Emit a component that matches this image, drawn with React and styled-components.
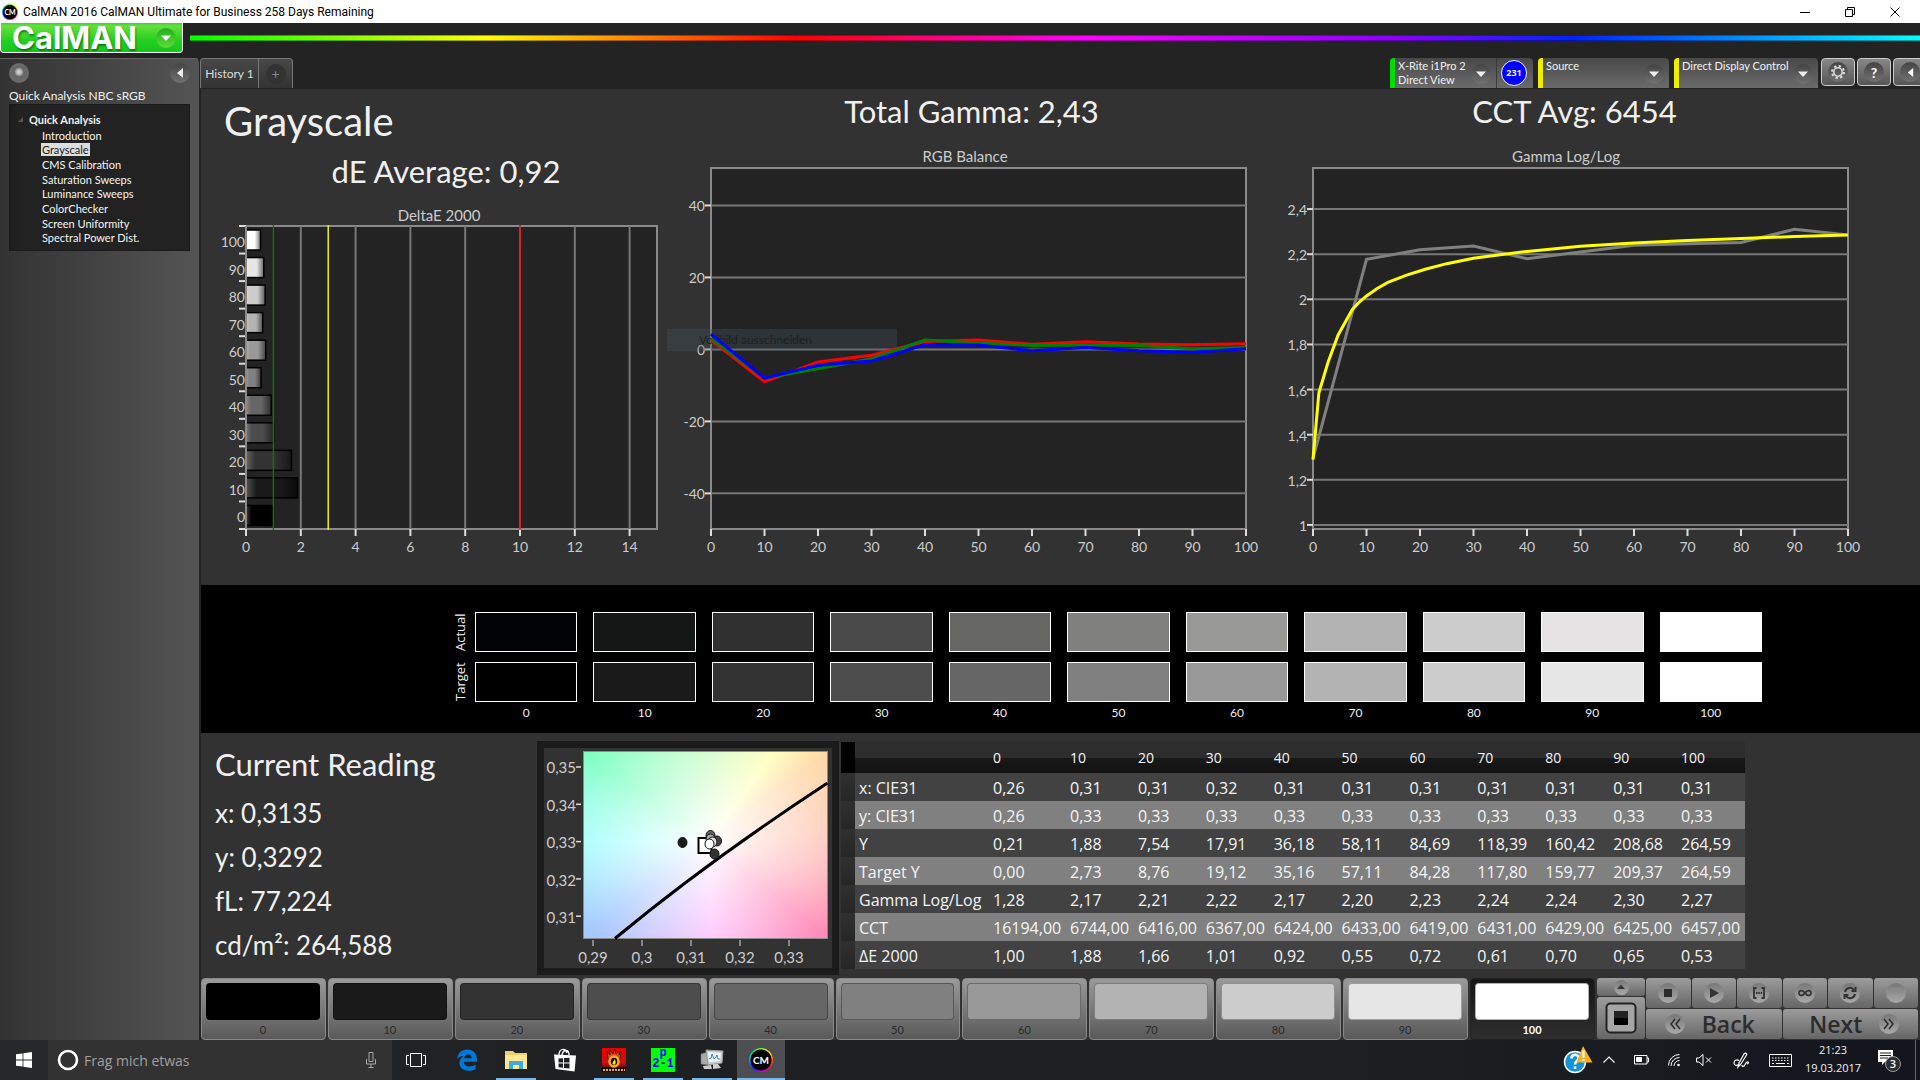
import React from 'react';
import styled, { createGlobalStyle, css } from 'styled-components';

const calibri = "Lato, 'Open Sans', sans-serif";
const segoe = "'Open Sans', 'Noto Sans', sans-serif";

const GlobalStyle = createGlobalStyle`
	* {
		box-sizing: border-box;
	}
	body {
		margin: 0;
		background: #232323;
		color: #f0f0f0;
		font-family: ${calibri};
		font-size: 14px;
	}
	button {
		font: inherit;
		color: inherit;
		border: 0;
		padding: 0;
		background: none;
	}
	svg {
		display: block;
	}
`;

const LEVELS = [ 0, 10, 20, 30, 40, 50, 60, 70, 80, 90, 100 ];

const TARGET = [
	'#000000',
	'#1a1a1a',
	'#333333',
	'#4d4d4d',
	'#666666',
	'#808080',
	'#999999',
	'#b3b3b3',
	'#cccccc',
	'#e6e6e6',
	'#ffffff'
];

const ACTUAL = [
	'#020304',
	'#151716',
	'#303030',
	'#4a4a4a',
	'#676765',
	'#80807f',
	'#999998',
	'#b3b3b3',
	'#cccbcb',
	'#e6e4e5',
	'#ffffff'
];

const DELTA_E = [ 1.0, 1.88, 1.66, 1.01, 0.92, 0.55, 0.72, 0.61, 0.7, 0.65, 0.53 ];

const RGB_BALANCE = [
	{ color: '#ff0000', values: [ 2.6, -9, -3.5, -1.6, 2.2, 2.6, 1.4, 2.1, 1.5, 1.3, 1.6 ] },
	{ color: '#008000', values: [ 3, -8, -5.4, -2.6, 2.6, 1.8, 1.1, 1.2, 1.1, 0.2, 0.5 ] },
	{ color: '#0000ff', values: [ 4.2, -8, -4.4, -3.2, 1.3, 1.2, -0.4, 0.5, -0.4, -0.8, 0.2 ] }
];

const toPoints = values => values.map((v, i) => [ i * 10, v ]);

const GAMMA_ACTUAL = toPoints([ 1.295, 2.177, 2.22, 2.236, 2.18, 2.21, 2.24, 2.246, 2.252, 2.31, 2.285 ]);

const GAMMA_TARGET = [
	[ 0, 1.29 ],
	[ 1.1, 1.586 ],
	[ 2.8, 1.72 ],
	[ 4.7, 1.842 ],
	[ 7.3, 1.953 ],
	[ 8.6, 1.987 ],
	[ 10, 2.015 ],
	[ 12, 2.048 ],
	[ 14, 2.075 ],
	[ 17.5, 2.107 ],
	[ 21, 2.133 ],
	[ 25, 2.158 ],
	[ 30, 2.182 ],
	[ 35, 2.198 ],
	[ 40, 2.212 ],
	[ 50, 2.235 ],
	[ 60, 2.25 ],
	[ 70, 2.261 ],
	[ 80, 2.27 ],
	[ 90, 2.278 ],
	[ 100, 2.285 ]
];

const READINGS = [
	[ 'x: CIE31', '0,26', '0,31', '0,31', '0,32', '0,31', '0,31', '0,31', '0,31', '0,31', '0,31', '0,31' ],
	[ 'y: CIE31', '0,26', '0,33', '0,33', '0,33', '0,33', '0,33', '0,33', '0,33', '0,33', '0,33', '0,33' ],
	[ 'Y', '0,21', '1,88', '7,54', '17,91', '36,18', '58,11', '84,69', '118,39', '160,42', '208,68', '264,59' ],
	[ 'Target Y', '0,00', '2,73', '8,76', '19,12', '35,16', '57,11', '84,28', '117,80', '159,77', '209,37', '264,59' ],
	[ 'Gamma Log/Log', '1,28', '2,17', '2,21', '2,22', '2,17', '2,20', '2,23', '2,24', '2,24', '2,30', '2,27' ],
	[
		'CCT',
		'16194,00',
		'6744,00',
		'6416,00',
		'6367,00',
		'6424,00',
		'6433,00',
		'6419,00',
		'6431,00',
		'6429,00',
		'6425,00',
		'6457,00'
	],
	[ 'ΔE 2000', '1,00', '1,88', '1,66', '1,01', '0,92', '0,55', '0,72', '0,61', '0,70', '0,65', '0,53' ]
];

const PAGES = [
	'Introduction',
	'Grayscale',
	'CMS Calibration',
	'Saturation Sweeps',
	'Luminance Sweeps',
	'ColorChecker',
	'Screen Uniformity',
	'Spectral Power Dist.'
];

/* ---------- window frame ---------- */

const Screen = styled.div`
	display: flex;
	flex-direction: column;
	min-height: 100vh;
	overflow: hidden;
`;

const TitleBar = styled.header`
	display: flex;
	align-items: center;
	height: 23px;
	padding: 0 3px 0 2px;
	background: #fff;
	color: #000;
	font: 12px Roboto, sans-serif;
`;

const TitleText = styled.span`
	flex: 1;
	padding-left: 5px;
`;

const WindowButton = styled.button`
	display: grid;
	place-items: center;
	width: 45px;
	height: 20px;
	color: #000;
`;

const LogoRing = styled.span`
	display: grid;
	place-items: center;
	width: ${props => props.$size}px;
	height: ${props => props.$size}px;
	border-radius: 50%;
	background: radial-gradient(circle, #000 60%, transparent 64%),
		conic-gradient(#7f0, #fd0, #f60, #f06, #c0f, #22f, #0af, #0d8, #7f0);
	color: #fff;
	font: bold ${props => (props.$size > 20 ? 10 : 7)}px Lato, sans-serif;
`;

const BrandBar = styled.div`
	display: flex;
	align-items: flex-start;
	height: 35px;
`;

const Brand = styled.button`
	display: flex;
	align-items: center;
	justify-content: space-between;
	width: 183px;
	height: 30px;
	padding: 0 6px 0 11px;
	border: solid #fff;
	border-width: 0 1px 1px 1px;
	border-radius: 0 0 4px 4px;
	background: linear-gradient(#3fd13a, #66e03a 10%, #25cf22 60%, #12c81a);
`;

const BrandName = styled.span`
	font: 700 31px/28px Inter, Lato, sans-serif;
	color: #fff;
	text-shadow: 1px 2px 2px rgba(0, 70, 0, 0.6);
`;

const Rainbow = styled.div`
	flex: 1;
	height: 6px;
	margin: 12px 0 0 7px;
	border: solid rgba(0, 0, 0, 0.35);
	border-width: 1px 0;
	background: linear-gradient(90deg, #0f0, #ff0 17%, #f00 35%, #f0f 52%, #80f 70%, #02f 80%, #0ff);
`;

const Body = styled.div`
	display: flex;
	flex: 1;
`;

/* ---------- sidebar ---------- */

const Sidebar = styled.nav`
	width: 200px;
	padding: 0 9px;
	border-top: 1px solid #666;
	border-right: 1px solid #222;
	border-radius: 0 5px 0 0;
	background: linear-gradient(90deg, #333, #545454);
`;

const SidebarTools = styled.div`
	display: flex;
	justify-content: space-between;
	align-items: center;
	height: 27px;
`;

const Round = styled.span`
	display: grid;
	flex: none;
	place-items: center;
	width: ${props => props.$size || 20}px;
	height: ${props => props.$size || 20}px;
	border-radius: 50%;
	background: ${props => props.$fill || 'linear-gradient(#444, #717171)'};
`;

const WorkflowName = styled.h2`
	margin: 0;
	height: 18px;
	font: 12px/20px ${calibri};
`;

const Tree = styled.div`
	height: 147px;
	padding: 8px 0 0 8px;
	border: 1px solid #1b1b1b;
	background: linear-gradient(90deg, #1c1c1c, #222 8px);
	font-size: 11px;
`;

const TreeRoot = styled.div`
	display: flex;
	align-items: center;
	gap: 6px;
	height: 13px;
	font-weight: bold;
`;

const TreeList = styled.ul`
	display: flex;
	flex-direction: column;
	height: 119px;
	margin: 0;
	padding: 2px 0 0 23px;
	list-style: none;
`;

const TreeItem = styled.li`
	display: flex;
	flex: 1;
	align-items: center;
`;

const TreeLink = styled.a`
	padding: 0 1px;
	line-height: 13px;
	text-decoration: none;
	color: ${props => (props.$active ? '#222' : '#f5f5f5')};
	background: ${props => (props.$active ? '#ddd' : 'transparent')};
`;

/* ---------- tab strip ---------- */

const Main = styled.main`
	display: flex;
	flex: 1;
	flex-direction: column;
	min-width: 0;
`;

const TabStrip = styled.div`
	display: flex;
	align-items: flex-start;
	height: 31px;
	overflow: hidden;
`;

const tabFace = css`
	height: 30px;
	border: 1px solid #777;
	border-bottom: 0;
	background: linear-gradient(#484848, #333);
`;

const Tab = styled.button`
	${tabFace}
	width: 59px;
	border-radius: 4px 0 0 0;
	font-size: 12px;
	color: #ddd;
`;

const AddTab = styled.button`
	${tabFace}
	display: grid;
	place-items: center;
	width: 34px;
	border-left: 0;
	border-radius: 0 4px 0 0;
	color: #888;
`;

const Devices = styled.div`
	display: flex;
	flex: none;
	margin-left: auto;
	width: 530px;
	overflow: hidden;
`;

const Device = styled.div`
	display: flex;
	flex: none;
	width: ${props => props.$width}px;
	height: 30px;
	margin-right: ${props => props.$gap || 5}px;
	border-left: 5px solid ${props => props.$color};
	border-radius: 4px 4px 0 0;
	background: linear-gradient(#484848, #6b6b6b);
`;

const DeviceMenu = styled.button`
	display: flex;
	flex: 1;
	align-items: flex-start;
	justify-content: space-between;
	padding: 1px 5px 0 3px;
	font-size: 11px;
	line-height: 14px;
	text-align: left;
	white-space: pre;
`;

const MenuDot = styled(Round)`
	align-self: center;
`;

const Counter = styled.div`
	display: grid;
	place-items: center;
	width: 37px;
	padding-right: 2px;
	border-left: 1px solid #3a3a3a;
`;

const CounterDot = styled.span`
	width: 26px;
	height: 26px;
	border: 1px solid #eef;
	border-radius: 50%;
	background: #00f;
	font: bold 9px/24px ${segoe};
	text-align: center;
`;

const ToolButton = styled.button`
	display: grid;
	flex: none;
	place-items: center;
	width: 34px;
	height: 28px;
	margin-right: 2px;
	border: 1px solid #ccc;
	border-radius: 4px;
	background: linear-gradient(#888, #555);
	color: #fff;
`;

/* ---------- analysis page ---------- */

const Page = styled.div`
	flex: 1;
	border-left: 1px solid #232323;
	background: #323232;
`;

const Charts = styled.section`
	display: grid;
	grid-template-columns: 466fr 601fr 601fr 51fr;
	height: 496px;
`;

const ChartPanel = styled.div`
	min-width: 0;
`;

const PageTitle = styled.h1`
	margin: 0;
	padding: 8px 0 0 23px;
	height: 60px;
	font: 40px/48px ${calibri};
`;

const Stat = styled.h2`
	margin: 0;
	height: 56px;
	padding-left: ${props => (props.$inset || 0)}px;
	font: 31px/44px ${calibri};
	text-align: center;
`;

const ChartSvg = styled.svg`
	width: 100%;
	height: auto;
	overflow: visible;
	fill: #ccc;
	font: ${props => props.$font || 14}px ${calibri};
`;

const Strip = styled.section`
	height: 148px;
	padding: 17px 158px 0 252px;
	background: #000;
`;

const StripRow = styled.div`
	display: flex;
	height: 40px;
	margin-top: 10px;
`;

const StripName = styled.span`
	width: 22px;
	height: 40px;
	font: 13px/14px ${segoe};
	text-align: center;
	writing-mode: vertical-rl;
	transform: rotate(180deg);
	padding-left: 5px;
`;

const StripCells = styled.div`
	display: grid;
	flex: 1;
	grid-template-columns: repeat(11, 1fr);
	gap: 16px;
`;

const StripLabels = styled(StripCells)`
	margin-top: 5px;
	padding-left: 22px;
	font-size: 12px;
	line-height: 12px;
	text-align: center;
`;

const Swatch = styled.div`
	height: 40px;
	border: 1px solid #fff;
	background: ${props => props.$color};
`;

const Details = styled.section`
	display: flex;
	height: 245px;
	padding-top: 8px;
`;

const Reading = styled.div`
	width: 336px;
	padding-left: 14px;
`;

const ReadingTitle = styled.h2`
	margin: 0;
	height: 50px;
	font: 31px/46px ${calibri};
`;

const ReadingValue = styled.p`
	margin: 0;
	font: 26px/44px ${calibri};
`;

const CieBox = styled.div`
	width: 302px;
	height: 234px;
	margin-right: 2px;
	border: 7px solid #1b1b1b;
`;

const Chromaticity = styled.div`
	height: 100%;
	background: radial-gradient(ellipse farthest-corner at 51% 48%, #fff, rgba(255, 255, 255, 0) 92%),
		conic-gradient(
			from 0deg at 51% 48%,
			#c8fcc0,
			#ffffb0 37deg,
			#ffd8a4 53deg,
			#ffbcae 90deg,
			#ff8cba 129deg,
			#ffbcff 178deg,
			#a6c8ff 232deg,
			#98ffff 270deg,
			#80ffc4 306deg,
			#c8fcc0
		);
`;

const TableArea = styled.div`
	flex: 1;
	padding: 1px 175px 0 0;
`;

const Table = styled.table`
	width: 100%;
	border-collapse: collapse;
	table-layout: fixed;
	font: 16px/20px ${segoe};
	color: #f5f5f5;
`;

const HeadRow = styled.tr`
	height: 31px;
	background: linear-gradient(#2d2d2d 50%, #191919 50%, #111);
	font-size: 14px;
`;

const Row = styled.tr`
	height: 28px;
	background: ${props => (props.$alt ? '#808080' : '#424242')};
`;

const Cell = styled.td`
	padding: 1px 0 0 4px;
	font-weight: 400;
	text-align: left;
	white-space: nowrap;
`;

const Gutter = styled.td`
	width: 14px;
	padding: 0;
	background: ${props => (props.$head ? '#000' : 'linear-gradient(#303030, #262626)')};
`;

const Col = styled.col`
	width: ${props => props.$width}px;
`;

/* ---------- patches and transport ---------- */

const PatchBar = styled.section`
	display: flex;
	height: 62px;
	gap: 2px;
	padding-bottom: 1px;
`;

const Patches = styled.div`
	display: grid;
	flex: 1;
	grid-template-columns: repeat(11, 1fr);
	gap: 2px;
`;

const Patch = styled.button`
	display: flex;
	flex-direction: column;
	padding: 4px 5px 0 4px;
	border: 1px solid ${props => (props.$active ? '#222' : '#8a8a8a')};
	border-radius: 4px;
	background: ${props => (props.$active ? 'linear-gradient(#161616, #2e2e2e)' : 'linear-gradient(#9a9a9a, #595959)')};
	color: ${props => (props.$active ? '#fff' : '#2a2a2a')};
	font-weight: ${props => (props.$active ? 700 : 400)};
	font-size: 11px;
	text-align: center;
`;

const PatchColor = styled.span`
	width: 100%;
	height: 37px;
	border: 1px solid rgba(0, 0, 0, 0.3);
	border-radius: 4px;
	background: ${props => props.$color};
`;

const PatchLabel = styled.span`
	width: 100%;
	line-height: 19px;
`;

const Transport = styled.div`
	display: grid;
	grid-template-columns: 48px 272px;
	gap: 1px;
	padding-right: 2px;
`;

const StopColumn = styled.div`
	display: grid;
	grid-template-rows: 18px 42px;
	gap: 1px;
`;

const grayFace = css`
	display: flex;
	align-items: center;
	justify-content: center;
	border-radius: 3px;
	background: linear-gradient(#9c9c9c, #666);
	color: #333;
`;

const FaceButton = styled.button`${grayFace}`;

const TransportRows = styled.div`
	display: grid;
	grid-template-rows: 30px 30px;
	gap: 1px;
`;

const TransportRow = styled.div`
	display: grid;
	grid-template-columns: repeat(${props => props.$count}, 1fr);
	gap: 1px;
`;

const NavButton = styled.button`
	${grayFace}
	gap: 17px;
	padding: ${props => (props.$forward ? '0 0 0 8px' : '0 8px 0 0')};
	font: 600 23px/30px ${segoe};
	color: #2c2c2c;
`;

const discFill = 'linear-gradient(#777, #aaa)';

/* ---------- taskbar ---------- */

const Taskbar = styled.footer`
	display: flex;
	height: 40px;
	background: linear-gradient(90deg, #26282b, #1e2022 30%, #1c1f21 75%, #12151d);
	font-family: ${segoe};
`;

const TaskButton = styled.button`
	display: grid;
	place-items: center;
	width: 48px;
	height: 40px;
	margin-right: 1px;
	background: ${props => (props.$active ? '#4d4e51' : 'none')};
`;

const RunningButton = styled(TaskButton)`
	position: relative;
	&::after {
		content: '';
		position: absolute;
		bottom: 0;
		left: ${props => (props.$active ? 0 : 4)}px;
		right: ${props => (props.$active ? 0 : 4)}px;
		height: 2px;
		background: #76b9ed;
	}
`;

const StartButton = styled(TaskButton)`
	margin: 0;
`;

const ViewButton = styled(TaskButton)`
	margin-right: 3px;
`;

const Search = styled.label`
	display: flex;
	align-items: center;
	width: 344px;
	padding: 0 15px 0 9px;
	gap: 5px;
	background: #323232;
`;

const SearchInput = styled.input`
	flex: 1;
	min-width: 0;
	padding: 0;
	border: 0;
	outline: 0;
	background: none;
	color: #ccc;
	font: 14px ${segoe};
	&::placeholder {
		color: #a0a0a0;
		opacity: 1;
	}
`;

const PrimeTile = styled.span`
	display: grid;
	grid-template-rows: 11px 12px;
	width: 24px;
	height: 24px;
	background: #0f0;
	color: #00f;
	font: bold 12px/10px 'Liberation Mono', monospace;
	text-align: center;
`;

const Tray = styled.div`
	display: flex;
	margin-left: auto;
	padding-right: 4px;
`;

const TrayItem = styled.button`
	display: grid;
	place-items: center;
	width: ${props => props.$width}px;
	height: 40px;
	color: #fff;
`;

const Clock = styled.div`
	width: 72px;
	padding-top: 1px;
	font-size: 11px;
	line-height: 18px;
	text-align: center;
`;

const PeekEdge = styled.div`
	width: 1px;
	margin-left: 6px;
	background: #666;
`;

/* ---------- small drawings ---------- */

const Arrow = ({ dir = 'down', size = 10 }) => {
	const paths = {
		down: 'M0 2.5h10L5 8z',
		up: 'M0 7.5h10L5 2z',
		left: 'M8 0v10L2 5z',
		play: 'M1 0v10L10 5z'
	};
	return (
		<svg width={size} height={size} viewBox="0 0 10 10" fill="currentColor">
			<path d={paths[dir]} />
		</svg>
	);
};

const Line = ({ d, size = 20, width = 1.2, view = 20 }) => (
	<svg width={size} height={size} viewBox={`0 0 ${view} ${view}`} fill="none" stroke="currentColor" strokeWidth={width}>
		<path d={d} />
	</svg>
);

const Gear = () => (
	<svg width="16" height="16" viewBox="0 0 16 16" fill="none" stroke="#ddd">
		<circle cx="8" cy="8" r="4.2" strokeWidth="1.6" />
		<circle cx="8" cy="8" r="6" strokeWidth="2" strokeDasharray="2.3 2.41" />
	</svg>
);

/* ---------- charts ---------- */

const DeltaEChart = () => {
	const left = 45;
	const top = 21;
	const width = 411;
	const height = 303;
	const unit = width / 15;
	const rowHeight = height / 11;
	const limits = [ [ 1, '#008000' ], [ 3, '#ffff00' ], [ 10, '#ff0000' ] ];

	return (
		<ChartSvg viewBox="0 0 466 360" role="img" aria-label="DeltaE 2000">
			<defs>
				<linearGradient id="barShade">
					<stop offset="0" stopColor="#fff" stopOpacity=".25" />
					<stop offset=".2" stopColor="#fff" stopOpacity="0" />
					<stop offset=".6" stopColor="#000" stopOpacity="0" />
					<stop offset="1" stopColor="#000" stopOpacity=".55" />
				</linearGradient>
			</defs>
			<text x="238" y="16" fontSize="15" textAnchor="middle">DeltaE 2000</text>
			<rect x={left} y={top} width={width} height={height} fill="#232323" stroke="#8a8a8a" strokeWidth="2" />
			{[ 0, 2, 4, 6, 8, 10, 12, 14 ].map(v => (
				<g key={v}>
					<path d={`M${left + v * unit} ${top}v${height}`} stroke="#777" strokeWidth="2" />
					<path d={`M${left + v * unit} ${top + height}v7`} stroke="#ddd" strokeWidth="2" />
					<text x={left + v * unit} y="347" textAnchor="middle">{v}</text>
				</g>
			))}
			{LEVELS.map((level, i) => {
				const y = top + (10 - i) * rowHeight;
				const bar = { x: left, y: y + 4, width: DELTA_E[i] * unit, height: 20 };
				return (
					<g key={level}>
						<rect {...bar} fill={TARGET[i]} />
						<rect {...bar} fill="url(#barShade)" stroke="#000" strokeWidth="1.5" />
						<text x={left - 1} y={y + 21} textAnchor="end">{level}</text>
					</g>
				);
			})}
			{Array.from({ length: 12 }, (_, i) => (
				<path key={i} d={`M${left - 7} ${top + i * rowHeight}h7`} stroke="#ddd" strokeWidth="2" />
			))}
			<path d={`M${left} ${top}v${height}`} stroke="#8a8a8a" strokeWidth="2" />
			{limits.map(([ v, color ]) => (
				<path key={v} d={`M${left + v * unit} ${top - 1}v${height + 2}`} stroke={color} strokeWidth="1.4" />
			))}
		</ChartSvg>
	);
};

const LineChart = ({ title, left, min, max, ticks, series, children }) => {
	const top = 23;
	const width = 535;
	const height = 361;
	const px = v => left + v * width / 100;
	const py = v => top + (max - v) / (max - min) * height;

	return (
		<ChartSvg viewBox="0 0 601 420" role="img" aria-label={title}>
			<text x="298" y="17" fontSize="15" textAnchor="middle">{title}</text>
			<rect x={left} y={top} width={width} height={height} fill="#232323" stroke="#8a8a8a" strokeWidth="2" />
			{ticks.map(v => (
				<g key={v}>
					<path d={`M${left} ${py(v)}h${width}`} stroke="#777" strokeWidth="2" />
					<path d={`M${left - 6} ${py(v)}h6`} stroke="#ddd" strokeWidth="2" />
					<text x={left - 6} y={py(v) + 6} textAnchor="end">{String(v).replace('.', ',')}</text>
				</g>
			))}
			{LEVELS.map(v => (
				<g key={v}>
					<path d={`M${px(v)} ${top + height}v7`} stroke="#ddd" strokeWidth="2" />
					<text x={px(v)} y="407" textAnchor="middle">{v}</text>
				</g>
			))}
			{children}
			{series.map(({ color, points }) => (
				<polyline
					key={color}
					points={points.map(([ x, y ]) => `${px(x)},${py(y)}`).join(' ')}
					fill="none"
					stroke={color}
					strokeWidth="3"
				/>
			))}
		</ChartSvg>
	);
};

const CieChart = () => {
	const dots = [
		[ 138.5, 94.5, '#1a1a1a' ],
		[ 166.5, 87.5, '#666' ],
		[ 173, 93, '#444' ],
		[ 166.5, 91, '#aaa' ],
		[ 168.5, 94, '#ddd' ],
		[ 170.5, 106, '#333' ],
		[ 165.5, 96, '#fff' ]
	];
	return (
		<ChartSvg viewBox="0 0 288 220" $font={15} role="img" aria-label="CIE chromaticity">
			<foreignObject x="39" y="3" width="245" height="188">
				<Chromaticity />
			</foreignObject>
			<rect x="39.5" y="3.5" width="244" height="187" fill="none" stroke="#8a8a8a" />
			{[ '0,35', '0,34', '0,33', '0,32', '0,31' ].map((label, i) => (
				<g key={label}>
					<path d={`M32 ${19 + i * 37.3}h5`} stroke="#ddd" strokeWidth="1.5" />
					<text x="32" y={25 + i * 37.5} textAnchor="end">{label}</text>
				</g>
			))}
			{[ '0,29', '0,3', '0,31', '0,32', '0,33' ].map((label, i) => (
				<g key={label}>
					<path d={`M${49 + i * 49} 192v6`} stroke="#ddd" />
					<text x={49 + i * 49} y="215" textAnchor="middle">{label}</text>
				</g>
			))}
			<path d="M71 190.5Q163 114 283.5 35" fill="none" stroke="#000" strokeWidth="3" />
			<rect x="154.5" y="90" width="13" height="15" fill="#fff" fillOpacity=".6" stroke="#000" strokeWidth="2" />
			{dots.map(([ x, y, fill ]) => (
				<ellipse key={`${x}-${y}`} cx={x} cy={y} rx="4.5" ry="5" fill={fill} stroke="#111" />
			))}
		</ChartSvg>
	);
};

/* ---------- sections ---------- */

const AppSidebar = () => (
	<Sidebar>
		<SidebarTools>
			<Round $fill="radial-gradient(circle at 50% 45%, #ddd, #aaa 20%, #666 32%, #707070)" />
			<Round as="button" aria-label="Collapse"><Arrow dir="left" /></Round>
		</SidebarTools>
		<WorkflowName>Quick Analysis NBC sRGB</WorkflowName>
		<Tree>
			<TreeRoot>
				<svg width="5" height="5" viewBox="0 0 5 5" fill="#555"><path d="M5 0v5H0z" /></svg>
				Quick Analysis
			</TreeRoot>
			<TreeList>
				{PAGES.map(page => (
					<TreeItem key={page}>
						<TreeLink href="#" $active={page === 'Grayscale'}>{page}</TreeLink>
					</TreeItem>
				))}
			</TreeList>
		</Tree>
	</Sidebar>
);

const Tabs = () => (
	<TabStrip>
		<Tab>History 1</Tab>
		<AddTab aria-label="Add tab"><Round $fill="#333">+</Round></AddTab>
		<Devices>
			<Device $width={143} $color="#0d0">
				<DeviceMenu>
					{'X-Rite i1Pro 2\nDirect View'}
					<MenuDot><Arrow /></MenuDot>
				</DeviceMenu>
				<Counter><CounterDot>231</CounterDot></Counter>
			</Device>
			<Device $width={131} $color="#ee0">
				<DeviceMenu>Source<MenuDot><Arrow /></MenuDot></DeviceMenu>
			</Device>
			<Device $width={144} $gap={3} $color="#ee0">
				<DeviceMenu>Direct Display Control<MenuDot><Arrow /></MenuDot></DeviceMenu>
			</Device>
			<ToolButton aria-label="Settings"><Round><Gear /></Round></ToolButton>
			<ToolButton><Round><b>?</b></Round></ToolButton>
			<ToolButton aria-label="Collapse panel"><Round><Arrow dir="left" size={9} /></Round></ToolButton>
		</Devices>
	</TabStrip>
);

const ReadingsTable = () => (
	<Table>
		<colgroup>
			<Col $width={14} />
			<Col $width={134} />
			<Col $width={77} />
			{LEVELS.slice(1).map(level => <col key={level} />)}
		</colgroup>
		<thead>
			<HeadRow>
				<Gutter $head />
				<Cell />
				{LEVELS.map(level => <Cell as="th" key={level}>{level}</Cell>)}
			</HeadRow>
		</thead>
		<tbody>
			{READINGS.map(([ name, ...values ], i) => (
				<Row key={name} $alt={[ 1, 3, 5 ].includes(i)}>
					<Gutter />
					<Cell as="th">{name}</Cell>
					{values.map((value, j) => <Cell key={j}>{value}</Cell>)}
				</Row>
			))}
		</tbody>
	</Table>
);

const Controls = () => (
	<Transport>
		<StopColumn>
			<FaceButton aria-label="Expand"><Round $size={15} $fill={discFill}><Arrow dir="up" size={8} /></Round></FaceButton>
			<FaceButton aria-label="Stop pattern">
				<svg width="32" height="32" viewBox="0 0 32 32">
					<rect x="1.5" y="1.5" width="29" height="29" rx="4" fill="#a5a5a5" stroke="#222" strokeWidth="2" />
					<rect x="9" y="9" width="14" height="14" fill="#000" />
					<rect x="9" y="9" width="14" height="7" fill="#222" />
				</svg>
			</FaceButton>
		</StopColumn>
		<TransportRows>
			<TransportRow $count={6}>
				<FaceButton aria-label="Stop">
					<Round $fill={discFill}>
						<svg width="8" height="8"><rect width="8" height="8" fill="#2c2c2c" /></svg>
					</Round>
				</FaceButton>
				<FaceButton aria-label="Read"><Round $fill={discFill}><Arrow dir="play" size={10} /></Round></FaceButton>
				<FaceButton aria-label="Read series">
					<Round $fill={discFill}>
						<Line size={14} view={14} width={1.8} d="M4.500 2H2v10h2.500M9.500 2H12v10H9.500M4 7h1.500M6.300 7h1.500M8.600 7h1.500" />
					</Round>
				</FaceButton>
				<FaceButton aria-label="Read continuous">
					<Round $fill={discFill}>
						<Line size={16} view={16} width={1.7} d="M8 8C6 5 2 4.500 2 8s4 3 6 0 6-3.500 6 0-4 3-6 0z" />
					</Round>
				</FaceButton>
				<FaceButton aria-label="Repeat">
					<Round $fill={discFill}>
						<Line size={14} view={14} width={2} d="M2 6a5 5 0 0 1 9-2M12 8a5 5 0 0 1-9 2M12.500 1v4h-4M1.500 13V9h4" />
					</Round>
				</FaceButton>
				<FaceButton aria-label="Indicator"><Round $fill={discFill} /></FaceButton>
			</TransportRow>
			<TransportRow $count={2}>
				<NavButton>
					<Round $fill={discFill}><Line size={14} view={14} width={1.5} d="M7 2L3 7l4 5M12 2L8 7l4 5" /></Round>
					Back
				</NavButton>
				<NavButton $forward>
					Next
					<Round $fill={discFill}><Line size={14} view={14} width={1.5} d="M2 2l4 5-4 5M7 2l4 5-4 5" /></Round>
				</NavButton>
			</TransportRow>
		</TransportRows>
	</Transport>
);

const WindowsTaskbar = () => (
	<Taskbar>
		<StartButton aria-label="Start">
			<svg width="16" height="16" viewBox="0 0 16 16" fill="#fff">
				<path d="M0 2.3L6.6 1.4V7.6H0zM7.4 1.3L16 0v7.6H7.4zM0 8.4h6.6v6.2L0 13.7zM7.4 8.4H16V16l-8.6-1.3z" />
			</svg>
		</StartButton>
		<Search>
			<svg width="22" height="22" viewBox="0 0 22 22" fill="none" stroke="#fff" strokeWidth="2.6">
				<circle cx="11" cy="11" r="9" />
			</svg>
			<SearchInput placeholder="Frag mich etwas" aria-label="Frag mich etwas" />
			<svg width="12" height="18" viewBox="0 0 12 18" fill="none" stroke="#aaa">
				<path d="M4 1.5h4v9H4zM1.5 8v5h9V8M6 13v4M3.5 16.5h5" />
			</svg>
		</Search>
		<ViewButton aria-label="Task view">
			<svg width="20" height="16" viewBox="0 0 20 16" fill="none" stroke="#fff">
				<path d="M4.5 1.5h11v13h-11zM3 3.5H.5v9H3M17 3.5h2.5v9H17" />
			</svg>
		</ViewButton>
		<TaskButton aria-label="Edge">
			<svg width="22" height="22" viewBox="0 0 22 22" fill="#0078d7">
				<path d="M1 9.800C1.700 4.500 5.400.5 11.300.5 17.200.5 21 4.600 21 10.500v2.300H7.800c.1 3.200 2.600 4.700 5.800 4.700 2.300 0 4.300-.6 6-1.700v4.400c-2 .9-4.200 1.500-6.900 1.500C7.300 21.700 3.500 18.800 3.500 14c0-3.300 1.800-6 4.600-7.300C6.100 6.800 3 7.700 1 9.800zM8 9.200h7.700c0-2.400-1.300-3.800-3.800-3.800C9.800 5.400 8.400 6.700 8 9.200z" />
			</svg>
		</TaskButton>
		<RunningButton aria-label="Explorer">
			<svg width="22" height="20" viewBox="0 0 22 20">
				<path d="M0 1h8l2 2h12v16H0z" fill="#f0cf6b" />
				<path d="M0 5h22v14H0z" fill="#ffe793" />
				<path d="M4 19v-8h14v8h-4v-4H8v4z" fill="#3cabdf" />
			</svg>
		</RunningButton>
		<TaskButton aria-label="Store">
			<svg width="22" height="24" viewBox="0 0 22 24">
				<path d="M5 7c0-6 6-8 8-2M8 7c1-6 7-6 7 0" fill="none" stroke="#fff" strokeWidth="1.3" />
				<path d="M0 6.500l22 1-1.500 16L1.500 21z" fill="#fff" />
				<path d="M4.500 10.500l4.500-.3v4.300H4.500zM10 10.100l5.500-.4v4.800H10zM4.500 15.500H9v4.300l-4.500-.6zM10 15.500h5.500v4.900L10 19.900z" fill="#1d1f22" />
			</svg>
		</TaskButton>
		<RunningButton aria-label="FurMark">
			<svg width="24" height="24" viewBox="0 0 24 24">
				<defs>
					<linearGradient id="fire" x2="0" y2="1">
						<stop offset="0" stopColor="#e00" />
						<stop offset=".6" stopColor="#c11" />
						<stop offset="1" stopColor="#200" />
					</linearGradient>
				</defs>
				<path d="M0 0h24v24H0z" fill="url(#fire)" />
				<path d="M0 19h24v5H0z" fill="#100" />
				<path d="M6 11L5 3l3 4V2l3 4 2-5 1 5 3-3v4l2-3-1 8z" fill="#d84a1a" stroke="#300" strokeWidth=".6" />
				<ellipse cx="12" cy="13.5" rx="4.5" ry="5" fill="#200" stroke="#ffb020" strokeWidth="2.5" />
				<path d="M10.5 16c0-3 2-3 2-5 2 3 1 5 0 6z" fill="#fe0" />
				<path d="M1 22h22" stroke="#fa0" strokeWidth="2" strokeDasharray="2 1" />
			</svg>
		</RunningButton>
		<RunningButton><PrimeTile><span>p</span><span>2-1</span></PrimeTile></RunningButton>
		<RunningButton aria-label="Monitor">
			<svg width="24" height="24" viewBox="0 0 24 24">
				<path d="M1 6l7-2v13l-7-1z" fill="#aaa" stroke="#777" strokeWidth=".5" />
				<path d="M6 2l17 1-1 12-14 2z" fill="#ccc" stroke="#999" />
				<path d="M8 4l13 1-1 8-11 1z" fill="#eef6ff" />
				<path d="M9 11l2-1 1-4 2 5 2-2 1-2 1 4h2" fill="none" stroke="#38c" />
				<path d="M13 16l5 0 3 4-8 1zM3 18l8-1 1 4-8 0z" fill="#ccc" />
			</svg>
		</RunningButton>
		<RunningButton $active><LogoRing $size={24}>CM</LogoRing></RunningButton>
		<Tray>
			<TrayItem $width={34} aria-label="Help">
				<svg width="30" height="30" viewBox="0 0 30 30">
					<circle cx="12" cy="17" r="10.5" fill="#1593d8" stroke="#fff" strokeWidth="1.5" />
					<path d="M8.5 13.5c0-5 7-5 7-.5 0 3-3.500 3-3.500 6.500M12 21.500v2.500" fill="none" stroke="#fff" strokeWidth="2.6" />
					<path d="M20 1l9.5 16.5h-16z" fill="#fbb01e" />
					<path d="M20.5 5.5v7M20.5 14v2" stroke="#fff" strokeWidth="2.2" />
				</svg>
			</TrayItem>
			<TrayItem $width={28} aria-label="Show hidden icons"><Line size={14} view={14} d="M1.5 9.5L7 4l5.5 5.5" /></TrayItem>
			<TrayItem $width={36} aria-label="Battery">
				<svg width="15" height="10" viewBox="0 0 15 10" fill="none" stroke="#fff">
					<path d="M.5 .5h12.5v8.5H.5zM13 3h1.5v4H13" />
					<path d="M2.5 2.5h5v4h-5z" fill="#fff" />
				</svg>
			</TrayItem>
			<TrayItem $width={30} aria-label="Network">
				<svg width="14" height="14" viewBox="0 0 14 14" fill="none" stroke="#fff">
					<path d="M1.500 12.500A11 11 0 0 1 12.500 1.500M4 13a8.500 8.500 0 0 1 8.500-8.500M7 13a5.500 5.500 0 0 1 5.500-5.500" />
					<circle cx="11.500" cy="12" r="1.300" fill="#fff" stroke="none" />
				</svg>
			</TrayItem>
			<TrayItem $width={30} aria-label="Muted">
				<svg width="16" height="12" viewBox="0 0 16 12" fill="none" stroke="#fff">
					<path d="M.5 4v4H3l4 3.500V.5L3 4zM10 3.500l5 5M15 3.500l-5 5" />
				</svg>
			</TrayItem>
			<TrayItem $width={44} aria-label="Ink">
				<Line size={17} view={17} d="M6 8.500C3.500 7 1 8.500 1 11s3 3 4 1.500M5 15l1-4 5-9c1-1.500 3.500-.5 2.500 1l-5.500 9zM9 13c0 2 2 2 3-.5 1-2 2-3 3-2.500s0 2.500-1 1.500" />
			</TrayItem>
			<TrayItem $width={34} aria-label="Touch keyboard">
				<svg width="23" height="13" viewBox="0 0 23 13" fill="none" stroke="#fff">
					<path d="M.5 .5h22v12H.5z" />
					<path d="M3 4h17M3 6.500h17" strokeDasharray="1.500 1.500" />
					<path d="M3 9.500h2M7 9.500h9M18 9.500h2" />
				</svg>
			</TrayItem>
			<Clock>21:23<br />19.03.2017</Clock>
			<TrayItem $width={40} aria-label="Notifications">
				<svg width="26" height="26" viewBox="0 0 26 26">
					<path d="M2 3h15v12H9l-3 3v-3H2z" fill="#fff" />
					<path d="M4 6h11M4 8.500h11M4 11h8" stroke="#1c1f21" />
					<circle cx="17" cy="17" r="7.5" fill="#2b2d30" stroke="#999" />
					<text x="17" y="21" textAnchor="middle" fill="#fff" fontSize="11" fontWeight="600">3</text>
				</svg>
			</TrayItem>
			<PeekEdge />
		</Tray>
	</Taskbar>
);

const App = () => (
	<Screen>
		<GlobalStyle />
		<TitleBar>
			<LogoRing $size={16}>CM</LogoRing>
			<TitleText>CalMAN 2016 CalMAN Ultimate for Business 258 Days Remaining</TitleText>
			<WindowButton aria-label="Minimize"><Line size={10} view={10} width={1} d="M0 5.5h10" /></WindowButton>
			<WindowButton aria-label="Restore"><Line size={10} view={10} width={1} d="M.5 2.5h7v7h-7zM2.5 2.5v-2h7v7h-2" /></WindowButton>
			<WindowButton aria-label="Close"><Line size={10} view={10} width={1} d="M.5 .5l9 9M9.5 .5l-9 9" /></WindowButton>
		</TitleBar>
		<BrandBar>
			<Brand>
				<BrandName>CalMAN</BrandName>
				<Round $fill="linear-gradient(#1fae1c, #5fdc3a)"><Arrow /></Round>
			</Brand>
			<Rainbow />
		</BrandBar>
		<Body>
			<AppSidebar />
			<Main>
				<Tabs />
				<Page>
					<Charts>
						<ChartPanel>
							<PageTitle>Grayscale</PageTitle>
							<Stat $inset={24}>dE Average: 0,92</Stat>
							<DeltaEChart />
						</ChartPanel>
						<ChartPanel>
							<Stat $inset={8}>Total Gamma: 2,43</Stat>
							<LineChart
								title="RGB Balance"
								left={44}
								min={-49.9}
								max={50.4}
								ticks={[ 40, 20, 0, -20, -40 ]}
								series={RGB_BALANCE.map(s => ({ color: s.color, points: toPoints(s.values) }))}
							>
								<rect x="0" y="184" width="230" height="22" fill="#41525c" fillOpacity=".35" />
								<text x="32" y="199" fontSize="12" fill="#1e2022">Vollbild ausschneiden</text>
							</LineChart>
						</ChartPanel>
						<ChartPanel>
							<Stat $inset={12}>CCT Avg: 6454</Stat>
							<LineChart
								title="Gamma Log/Log"
								left={45}
								min={0.982}
								max={2.582}
								ticks={[ 2.4, 2.2, 2, 1.8, 1.6, 1.4, 1.2, 1 ]}
								series={[ { color: '#808080', points: GAMMA_ACTUAL }, { color: '#ffff00', points: GAMMA_TARGET } ]}
							/>
						</ChartPanel>
					</Charts>
					<Strip>
						{[ [ 'Actual', ACTUAL ], [ 'Target', TARGET ] ].map(([ name, colors ]) => (
							<StripRow key={name}>
								<StripName>{name}</StripName>
								<StripCells>{colors.map(color => <Swatch key={color} $color={color} />)}</StripCells>
							</StripRow>
						))}
						<StripLabels>{LEVELS.map(level => <span key={level}>{level}</span>)}</StripLabels>
					</Strip>
					<Details>
						<Reading>
							<ReadingTitle>Current Reading</ReadingTitle>
							<ReadingValue>x: 0,3135</ReadingValue>
							<ReadingValue>y: 0,3292</ReadingValue>
							<ReadingValue>fL: 77,224</ReadingValue>
							<ReadingValue>cd/m²: 264,588</ReadingValue>
						</Reading>
						<CieBox><CieChart /></CieBox>
						<TableArea><ReadingsTable /></TableArea>
					</Details>
					<PatchBar>
						<Patches>
							{LEVELS.map((level, i) => (
								<Patch key={level} $active={level === 100}>
									<PatchColor $color={TARGET[i]} />
									<PatchLabel>{level}</PatchLabel>
								</Patch>
							))}
						</Patches>
						<Controls />
					</PatchBar>
				</Page>
			</Main>
		</Body>
		<WindowsTaskbar />
	</Screen>
);

export default App;
